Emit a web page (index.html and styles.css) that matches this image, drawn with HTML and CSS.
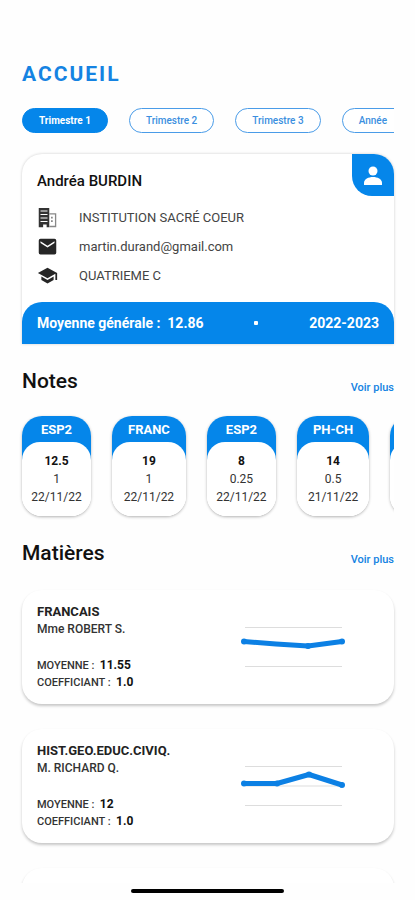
FILE: index.html
```html
<!DOCTYPE html>
<html lang="fr">
<head>
<meta charset="utf-8">
<meta name="viewport" content="width=device-width, initial-scale=1">
<title>Accueil</title>
<link rel="stylesheet" href="styles.css">
</head>
<body>
<main class="screen">
  <h1 class="title">ACCUEIL</h1>

  <nav class="periods" aria-label="Période">
    <button class="pill pill-active" type="button">Trimestre 1</button>
    <button class="pill" type="button">Trimestre 2</button>
    <button class="pill" type="button">Trimestre 3</button>
    <button class="pill pill-last" type="button">Année</button>
  </nav>

  <section class="profile">
    <div class="profile-body">
      <h2 class="name">Andréa BURDIN</h2>
      <ul class="details">
        <li class="detail">
          <svg class="icon" viewBox="0 0 24 24" aria-hidden="true"><path fill="#333" fill-rule="evenodd" d="M2 1h12v22h-3v-3H7v3H2zM4 4v1h8V4zM4 8v1h8V8zM4 12v1h8v-1zM4 16v1h8v-1z"/><path fill="#888" fill-rule="evenodd" d="M14 7h8v16h-8zM14 8.500v13h6.500v-13z"/><path fill="#888" d="M16 11h2v2h-2zM16 15h2v2h-2z"/></svg>
          INSTITUTION SACRÉ COEUR
        </li>
        <li class="detail">
          <svg class="icon" viewBox="0 0 24 24" aria-hidden="true"><path fill="#262626" d="M20 3H4a2 2 0 0 0-2 2v14a2 2 0 0 0 2 2h16a2 2 0 0 0 2-2V5a2 2 0 0 0-2-2zm0 5-8 5-8-5V6l8 5 8-5z"/></svg>
          martin.durand@gmail.com
        </li>
        <li class="detail">
          <svg class="icon" viewBox="0 0 24 24" aria-hidden="true"><path fill="#262626" d="M5 13.180v4L12 21l7-3.820v-4L12 17zM12 3 1 9l11 6 9-4.910V17h2V9z"/></svg>
          QUATRIEME C
        </li>
      </ul>
    </div>
    <button class="avatar" type="button" aria-label="Profil">
      <svg class="avatar-icon" viewBox="0 0 18 19" aria-hidden="true"><circle cx="9" cy="5" r="4.500" fill="#fff"/><path fill="#fff" d="M0 19v-2c0-4 4.500-6 9-6s9 2 9 6v2z"/></svg>
    </button>
    <div class="average">
      <span>Moyenne générale :&nbsp; 12.86</span>
      <span class="dot"></span>
      <span>2022-2023</span>
    </div>
  </section>

  <header class="section-head">
    <h2 class="section-title">Notes</h2>
    <a class="more" href="#notes">Voir plus</a>
  </header>
  <div class="grades" id="notes">
    <article class="grade"><h3 class="grade-subject">ESP2</h3><div class="grade-body"><strong>12.5</strong><span>1</span><span>22/11/22</span></div></article>
    <article class="grade"><h3 class="grade-subject">FRANC</h3><div class="grade-body"><strong>19</strong><span>1</span><span>22/11/22</span></div></article>
    <article class="grade"><h3 class="grade-subject">ESP2</h3><div class="grade-body"><strong>8</strong><span>0.25</span><span>22/11/22</span></div></article>
    <article class="grade"><h3 class="grade-subject">PH-CH</h3><div class="grade-body"><strong>14</strong><span>0.5</span><span>21/11/22</span></div></article>
    <article class="grade"><h3 class="grade-subject"></h3><div class="grade-body"></div></article>
  </div>

  <header class="section-head">
    <h2 class="section-title">Matières</h2>
    <a class="more" href="#matieres">Voir plus</a>
  </header>
  <div class="subjects" id="matieres">
    <article class="subject">
      <div class="subject-info">
        <h3 class="subject-name">FRANCAIS</h3>
        <p class="teacher">Mme ROBERT S.</p>
        <p class="line">MOYENNE :&nbsp; <b>11.55</b></p>
        <p class="line">COEFFICIANT :&nbsp; <b>1.0</b></p>
      </div>
      <svg class="chart" viewBox="0 0 104 48" aria-hidden="true">
        <path class="grid" d="M4 4.500h97M4 43.500h97"/>
        <path class="trend" d="M3 18.500 35 21 67 23 101 18.500"/>
        <g class="points"><circle cx="3" cy="18.500" r="3"/><circle cx="67" cy="23" r="3"/><circle cx="101" cy="18.500" r="3"/></g>
      </svg>
    </article>
    <article class="subject">
      <div class="subject-info">
        <h3 class="subject-name">HIST.GEO.EDUC.CIVIQ.</h3>
        <p class="teacher">M. RICHARD Q.</p>
        <p class="line">MOYENNE :&nbsp; <b>12</b></p>
        <p class="line">COEFFICIANT :&nbsp; <b>1.0</b></p>
      </div>
      <svg class="chart" viewBox="0 0 104 48" aria-hidden="true">
        <path class="grid" d="M4 4.500h97M4 24h97M4 43.500h97"/>
        <path class="trend" d="M3 21.500H36L68 12.500 101 23"/>
        <g class="points"><circle cx="3" cy="21.500" r="3"/><circle cx="36" cy="21.500" r="3"/><circle cx="68" cy="12.500" r="3"/><circle cx="101" cy="23" r="3"/></g>
      </svg>
    </article>
    <article class="subject"></article>
  </div>
</main>
<footer class="home"><div class="home-bar"></div></footer>
</body>
</html>
```

FILE: styles.css
```css
* {
  box-sizing: border-box;
  margin: 0;
  padding: 0;
}

:root {
  --blue: #0586ea;
}

body {
  display: flex;
  flex-direction: column;
  height: 100vh;
  background: #fefefe;
  color: #111;
  font-family: Roboto, "Liberation Sans", sans-serif;
}

button {
  border: 0;
  font-family: inherit;
}

.screen {
  flex: 1;
  min-height: 0;
  overflow: hidden;
  padding: 60px 21px 0 22px;
}

.title {
  color: #1583e2;
  font-size: 21px;
  font-weight: 700;
  letter-spacing: 2px;
  line-height: 28px;
}

.periods {
  display: flex;
  gap: 21px;
  margin-top: 20px;
  overflow: hidden;
}

.pill {
  flex: none;
  height: 25px;
  padding: 0 16px;
  border: 1px solid #4a9ce8;
  border-radius: 13px;
  background: #fff;
  color: #3b8fe0;
  font-size: 10px;
  font-weight: 500;
}

.pill-active {
  border-color: var(--blue);
  background: var(--blue);
  color: #fff;
  font-weight: 700;
}

.pill-last {
  padding-right: 32px;
}

.profile {
  position: relative;
  margin-top: 21px;
  border-radius: 20px 20px 0 0;
  background: #fff;
  box-shadow: 0 0 3px rgba(0, 0, 0, 0.2);
}

.profile-body {
  padding: 17px 15px 12px;
}

.name {
  font-size: 15px;
  font-weight: 500;
  line-height: 20px;
}

.details {
  margin-top: 12px;
  list-style: none;
}

.detail {
  display: flex;
  align-items: center;
  gap: 21px;
  height: 29px;
  color: #444;
  font-size: 13px;
}

.icon {
  width: 21px;
  height: 21px;
}

.avatar {
  position: absolute;
  top: 0;
  right: 0;
  display: grid;
  place-items: center;
  width: 42px;
  height: 42px;
  border-radius: 0 20px 0 20px;
  background: var(--blue);
}

.avatar-icon {
  width: 18px;
  height: 19px;
}

.average {
  display: flex;
  align-items: center;
  justify-content: space-between;
  height: 42px;
  padding: 0 15px;
  border-radius: 20px 20px 0 0;
  background: var(--blue);
  color: #fff;
  font-size: 14px;
  font-weight: 700;
}

.dot {
  width: 4px;
  height: 4px;
  border-radius: 1px;
  background: #fff;
}

.section-head {
  display: flex;
  align-items: flex-end;
  justify-content: space-between;
  margin-top: 23px;
}

.section-title {
  font-size: 21px;
  font-weight: 500;
  line-height: 28px;
}

.more {
  color: #1583e2;
  font-size: 11px;
  font-weight: 500;
  line-height: 14px;
  text-decoration: none;
}

.grades {
  display: flex;
  gap: 21px;
  margin: 13px 0 -8px -8px;
  padding: 8px 0 8px 8px;
  overflow: hidden;
}

.grade {
  flex: none;
  display: flex;
  flex-direction: column;
  min-width: 69px;
  height: 100px;
  border-radius: 20px;
  background: linear-gradient(var(--blue) 50%, #fff 50%);
  box-shadow: 0 1px 3px rgba(0, 0, 0, 0.3);
  text-align: center;
}

.grade-subject {
  height: 26px;
  padding: 0 16px;
  color: #fff;
  font-size: 13px;
  font-weight: 700;
  line-height: 28px;
}

.grade-body {
  flex: 1;
  display: flex;
  flex-direction: column;
  padding: 10px 9px 0;
  border-radius: 18px 18px 20px 20px;
  background: #fff;
  color: #333;
  font-size: 12px;
  line-height: 18px;
}

.grade-body strong {
  color: #111;
  font-weight: 700;
}

.subjects {
  display: flex;
  flex-direction: column;
  gap: 25px;
  margin-top: 23px;
}

.subject {
  display: flex;
  align-items: center;
  justify-content: space-between;
  min-height: 114px;
  padding: 0 49px 0 15px;
  border-radius: 20px;
  background: #fff;
  box-shadow: 0 2px 3px rgba(0, 0, 0, 0.22);
}

.subject-name {
  color: #222;
  font-size: 13px;
  font-weight: 700;
  line-height: 18px;
}

.teacher {
  margin-bottom: 20px;
  color: #333;
  font-size: 12px;
  font-weight: 500;
  line-height: 16px;
}

.line {
  color: #333;
  font-size: 11px;
  font-weight: 500;
  line-height: 16px;
}

.line b {
  color: #111;
  font-size: 12px;
}

.chart {
  flex: none;
  width: 104px;
  height: 48px;
}

.grid {
  fill: none;
  stroke: #ddd;
}

.trend {
  fill: none;
  stroke: #0c80e4;
  stroke-width: 5;
  stroke-linejoin: round;
}

.points {
  fill: #0c80e4;
}

.home {
  display: flex;
  justify-content: center;
  height: 17px;
  padding-top: 6px;
}

.home-bar {
  width: 37%;
  height: 4px;
  border-radius: 2px;
  background: #000;
}
```
